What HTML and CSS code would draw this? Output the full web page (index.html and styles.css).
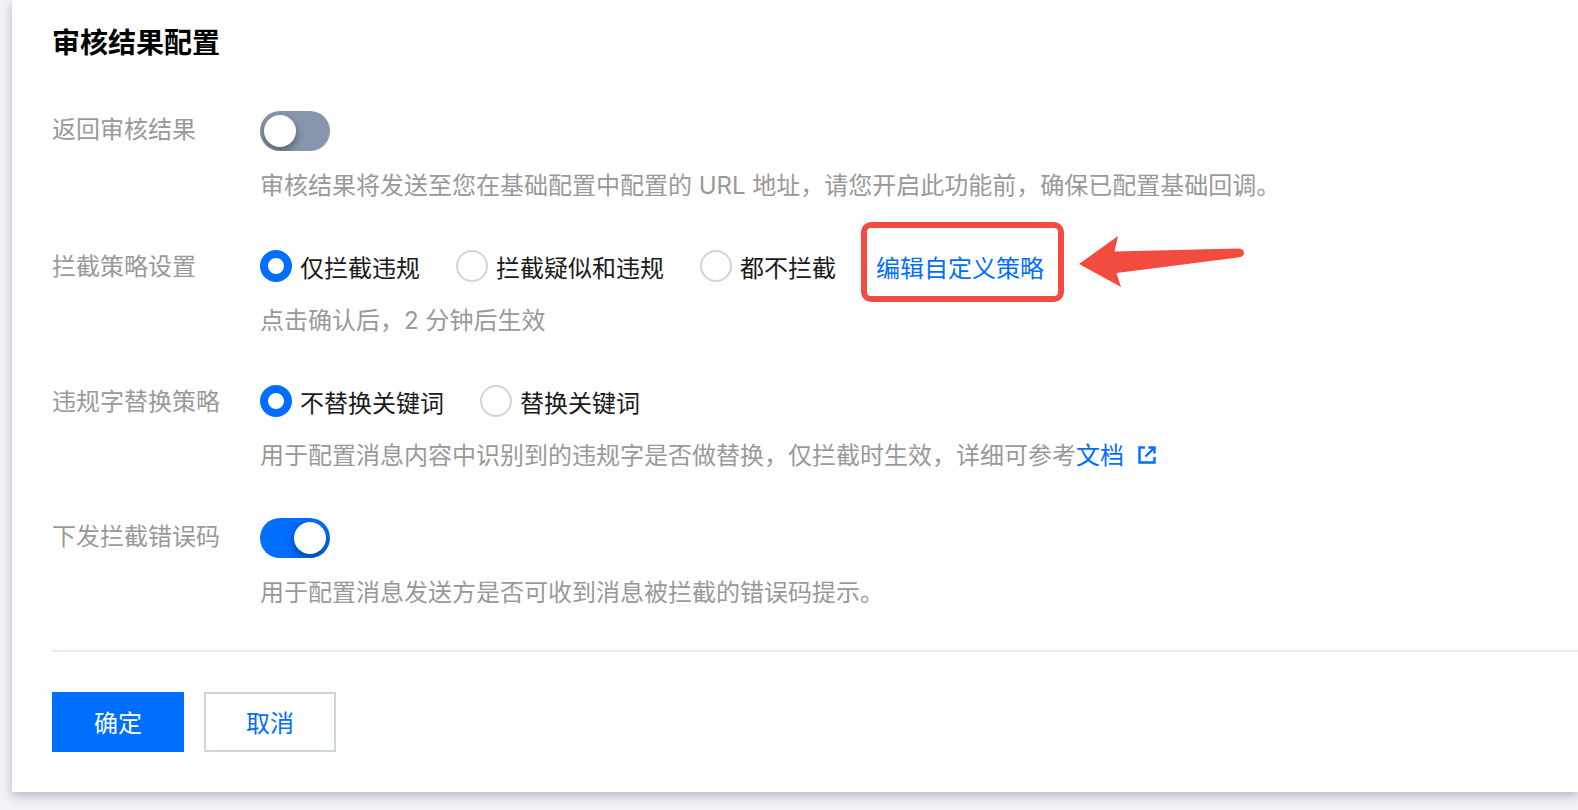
FILE: index.html
```html
<!DOCTYPE html>
<html lang="zh">
	<head>
		<meta charset="UTF-8" />
		<meta name="viewport" content="width=device-width, initial-scale=1.0" />
		<title>审核结果配置</title>
		<link rel="stylesheet" href="styles.css">
	</head>
	<body>
		<form class="card">
			<h3 class="title">审核结果配置</h3>

			<div class="item">
				<label class="label" for="result">返回审核结果</label>
				<div class="control">
					<input class="switch" type="checkbox" id="result" />
					<p class="help">审核结果将发送至您在基础配置中配置的 URL 地址，请您开启此功能前，确保已配置基础回调。</p>
				</div>
			</div>

			<div class="item" role="radiogroup" aria-labelledby="block-label">
				<span class="label" id="block-label">拦截策略设置</span>
				<div class="control">
					<div class="radios">
						<label class="radio"><input type="radio" name="block" checked /><span>仅拦截违规</span></label>
						<label class="radio"><input type="radio" name="block" /><span>拦截疑似和违规</span></label>
						<label class="radio"><input type="radio" name="block" /><span>都不拦截</span></label>
						<div class="mark">
							<a class="link" href="#">编辑自定义策略</a>
							<svg class="arrow" width="166" height="52" viewBox="0 0 166 52">
								<path d="M0 28L39 0L35.500 15.500L159 12.500Q165 12.500 165 17Q165 20.500 159 21.500L37.500 37L42 51Z" fill="#f24b40" />
							</svg>
						</div>
					</div>
					<p class="help">点击确认后，2 分钟后生效</p>
				</div>
			</div>

			<div class="item" role="radiogroup" aria-labelledby="replace-label">
				<span class="label" id="replace-label">违规字替换策略</span>
				<div class="control">
					<div class="radios">
						<label class="radio"><input type="radio" name="replace" checked /><span>不替换关键词</span></label>
						<label class="radio"><input type="radio" name="replace" /><span>替换关键词</span></label>
					</div>
					<p class="help">用于配置消息内容中识别到的违规字是否做替换，仅拦截时生效，详细可参考<a class="link" href="#">文档<svg class="external" width="18" height="18" viewBox="0 0 18 18" fill="none" stroke="currentColor" stroke-width="2.400">
						<path d="M7 1.500H1.500V16.500H16.500V11M10.500 1.500H16.500V7.500M16 2L7.500 10.500" />
					</svg></a></p>
				</div>
			</div>

			<div class="item">
				<label class="label" for="code">下发拦截错误码</label>
				<div class="control">
					<input class="switch" type="checkbox" id="code" checked />
					<p class="help">用于配置消息发送方是否可收到消息被拦截的错误码提示。</p>
				</div>
			</div>

			<div class="footer">
				<button class="btn primary" type="button">确定</button>
				<button class="btn" type="button">取消</button>
			</div>
		</form>
	</body>
</html>
```
FILE: styles.css
```css
body,
h3,
p {
	margin: 0;
}
body {
	background: #f2f3f8;
	overflow-x: hidden;
	color: #1a1a1a;
	font: 24px/36px "Noto Sans CJK SC", sans-serif;
}
.card {
	margin: 0 0 18px 12px;
	padding: 20px 0 40px 40px;
	background: #fff;
	box-shadow: 0 4px 10px rgba(54, 58, 80, 0.32);
}
.title {
	margin-bottom: 49px;
	color: #000;
	font-size: 28px;
	line-height: 42px;
}
.item {
	display: flex;
	margin-bottom: 44px;
}
.label {
	flex: none;
	width: 208px;
	color: #999;
	line-height: 34px;
}
.control {
	flex: 1;
}
.help {
	margin-top: 17px;
	color: #999;
	font-family: Inter, "Noto Sans CJK SC", sans-serif;
}
.link {
	color: #006eff;
	text-decoration: none;
}

/* 开关 */
.switch {
	appearance: none;
	display: block;
	box-sizing: border-box;
	width: 70px;
	height: 40px;
	margin: 0;
	padding: 4px;
	border-radius: 20px;
	background: #8796ae;
	overflow: hidden;
}
.switch::before {
	content: "";
	display: block;
	width: 32px;
	height: 32px;
	border-radius: 50%;
	background: #fff;
	box-shadow: 0 4px 10px rgba(0, 0, 0, 0.4);
}
.switch:checked {
	background: #006eff;
}
.switch:checked::before {
	margin-left: auto;
}

/* 单选 */
.radios {
	display: flex;
	gap: 36px;
	line-height: 38px;
}
.radio {
	display: flex;
	gap: 8px;
}
.radio input {
	appearance: none;
	box-sizing: border-box;
	width: 32px;
	height: 32px;
	margin: 2px 0 0;
	border: 2px solid #cfd5de;
	border-radius: 50%;
	background: #fff;
}
.radio input:checked {
	border: 8px solid #006eff;
}

/* 红框和箭头标注 */
.mark {
	position: relative;
	margin-left: 4px;
}
.mark::before {
	content: "";
	position: absolute;
	inset: -26px -20px -16px -15px;
	border: 6px solid #f24b40;
	border-radius: 10px;
	pointer-events: none;
}
.arrow {
	position: absolute;
	top: -12px;
	left: 203px;
}

.external {
	margin-left: 14px;
}
.footer {
	display: flex;
	gap: 20px;
	margin-top: -5px;
	padding-top: 40px;
	border-top: 2px solid #e7eaef;
}
.btn {
	width: 132px;
	height: 60px;
	padding: 0;
	border: 2px solid #cfd5de;
	background: #fff;
	color: #006eff;
	font: inherit;
}
.btn.primary {
	border-color: #006eff;
	background: #006eff;
	color: #fff;
}
```
